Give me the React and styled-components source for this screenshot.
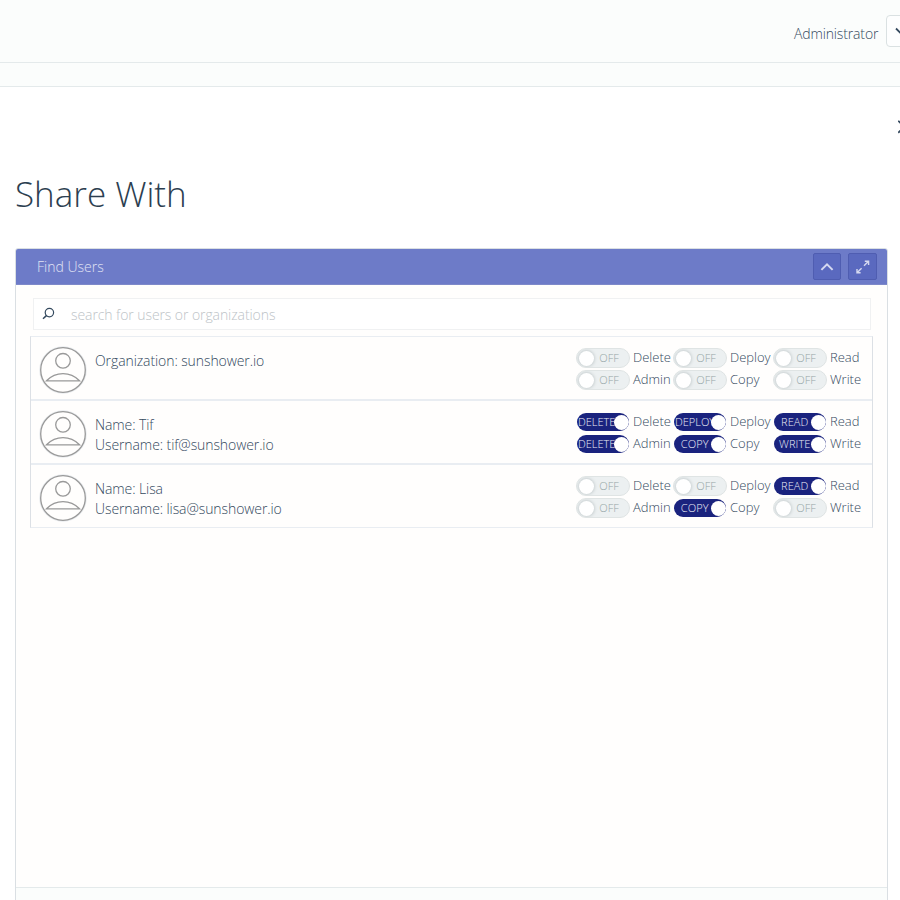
import React from "react";
import styled, { createGlobalStyle, css } from "styled-components";

const GlobalStyle = createGlobalStyle`
  * { box-sizing: border-box; }
  html, body { margin: 0; background: #fff; overflow: hidden; }
  body { font-family: "Open Sans", sans-serif; font-weight: 300; font-size: 14px; color: #34495e; }
`;

const Page = styled.div`
  width: 100%;
  height: 900px;
  overflow: hidden;
  display: flex;
  flex-direction: column;
`;

const TopBar = styled.header`
  flex: none;
  height: 63px;
  padding: 15px 0 0 794px;
  display: flex;
  align-items: flex-start;
  background: #fbfdfc;
  border-bottom: 1px solid #e4eaeb;
  overflow: hidden;
`;

const Account = styled.span`
  flex: none;
  width: 92px;
  line-height: 20px;
  margin-top: 9px;
  letter-spacing: -0.14px;
`;

const MenuButton = styled.button`
  flex: none;
  width: 32px;
  height: 32px;
  padding: 0 0 0 8px;
  border: 1px solid #dae1e2;
  border-radius: 4px;
  background: #fdfefe;
  color: #34495e;
  display: flex;
  align-items: center;
`;

const SubBar = styled.div`
  flex: none;
  height: 24px;
  background: #fbfdfc;
  border-bottom: 1px solid #e4eaeb;
`;

const CloseRow = styled.div`
  flex: none;
  height: 82px;
  padding: 33px 0 0 898px;
  overflow: hidden;
  svg { display: block; }
`;

const Title = styled.h1`
  flex: none;
  margin: 0 0 30px 15px;
  font-size: 35px;
  line-height: 49px;
  font-weight: 300;
  color: #2c3e50;
`;

const Panel = styled.section`
  flex: none;
  width: 873px;
  height: 680px;
  margin-left: 15px;
  border: 1px solid #dadfe3;
  border-radius: 3px 3px 0 0;
  background: #fbfdfc;
`;

const PanelHeader = styled.div`
  height: 36px;
  padding: 0 10px 0 21px;
  display: flex;
  align-items: center;
  gap: 7px;
  background: #6d7bc8;
  border-bottom: 1px solid #7e89c9;
  border-radius: 2px 2px 0 0;
  color: #e1e4f4;
`;

const PanelTitle = styled.span`
  flex: 1;
`;

const HeaderButton = styled.button`
  width: ${(p) => p.$width}px;
  height: 27px;
  padding: 0;
  display: flex;
  align-items: center;
  justify-content: center;
  border: 1px solid #4f5db1;
  border-radius: 2px;
  background: #5a69bf;
  color: #d5d9f0;
`;

const PanelBody = styled.div`
  height: 603px;
  padding: 13px 14px 0;
  background: #fffefd;
  border-bottom: 1px solid #e4eaeb;
`;

const Search = styled.label`
  height: 32px;
  margin: 0 2px 6px 3px;
  padding: 0 9px 0 8px;
  display: flex;
  align-items: center;
  gap: 16px;
  border: 1px solid #f0f1f2;
  background: #fff;
`;

const SearchInput = styled.input`
  flex: 1;
  border: 0;
  padding: 0;
  outline: 0;
  background: transparent;
  font: inherit;
  letter-spacing: -0.08px;
  &::placeholder { color: #bdc3c7; opacity: 1; }
`;

const List = styled.div`
  border: 1px solid #dce0e5;
  border-top-color: #e9edf2;
  border-bottom-color: #e9edf2;
`;

const UserRow = styled.div`
  height: ${(p) => (p.$last ? 62 : 64)}px;
  padding: 9px 8px 0;
  display: flex;
  border-bottom: ${(p) => (p.$last ? "0" : "2px solid #e9edf2")};
`;

const Details = styled.div`
  flex: 1;
  margin: 5px 0 0 8px;
  line-height: 20px;
  letter-spacing: -0.09px;
`;

const Permissions = styled.div`
  flex: none;
  height: 44px;
  margin-top: 1px;
  display: grid;
  grid-template-columns: 97px 100px 91px;
  grid-auto-rows: 22px;
`;

const Permission = styled.label`
  display: flex;
  align-items: center;
  gap: 3px;
  font-size: 13px;
  white-space: nowrap;
`;

const PermissionName = styled.span`
  line-height: 18px;
  padding-bottom: 2px;
`;

const Track = styled.span`
  flex: none;
  width: 54px;
  height: 20px;
  padding: 0 2px;
  display: flex;
  align-items: center;
  overflow: hidden;
  border: 1px solid #dfe4e4;
  border-radius: 10px;
  background: #ecf0f1;
  font-size: 11px;
  line-height: 18px;
  color: #95a5a6;
  ${(p) => p.$on && css`
    width: 52px;
    height: 18px;
    margin: 0 1px;
    padding: 0;
    border: 0;
    background: #1a237e;
    color: #eceef7;
  `}
`;

const Knob = styled.span`
  flex: none;
  width: 15px;
  height: 15px;
  border-radius: 50%;
  background: #fff;
  ${(p) => (p.$on
    ? css`margin-right: 0.5px;`
    : css`box-shadow: 0 0 3px 1px rgba(110, 125, 130, 0.28);`)}
`;

const State = styled.span`
  flex: 1;
  min-width: 0;
  display: flex;
  justify-content: ${(p) => (p.$fill ? "flex-start" : "center")};
  padding-left: ${(p) => (p.$fill ? 1 : p.$on ? 5 : 0)}px;
  padding-right: ${(p) => (p.$on ? 0 : 3)}px;
  letter-spacing: ${(p) => (p.$on && !p.$fill ? "0.1px" : "0")};
  white-space: nowrap;
`;

const Chevron = () => (
  <svg width="14" height="14" viewBox="0 0 14 14" fill="none" stroke="currentColor" strokeWidth="1.8">
    <path d="M1 4.5l5 5 5-5" />
  </svg>
);

const CloseIcon = () => (
  <svg width="14" height="14" viewBox="0 0 14 14" fill="none" stroke="#34495e" strokeWidth="1.8">
    <path d="M.2 .8l12 12M12.2 .8l-12 12" />
  </svg>
);

const CollapseIcon = () => (
  <svg width="14" height="14" viewBox="0 0 14 14" fill="none" stroke="currentColor" strokeWidth="2">
    <path d="M1.4 9.9L7 4.4l5.6 5.5" />
  </svg>
);

const ExpandIcon = () => (
  <svg width="14" height="14" viewBox="0 0 14 14" fill="none" stroke="currentColor" strokeWidth="1.4">
    <path d="M8.8 1.2h3.8v3.8M4.6 12.8H1V9M12.3 1.5L8 5.8M5.6 8.2L1.3 12.5" />
  </svg>
);

const SearchIcon = () => (
  <svg width="13" height="14" viewBox="0 0 13 14" fill="none" stroke="#34495e" strokeWidth="1.2">
    <circle cx="7.4" cy="5.6" r="4.2" />
    <path d="M4.4 8.6L1 11.8" strokeWidth="1.5" />
  </svg>
);

const AvatarIcon = () => (
  <svg width="48" height="48" viewBox="0 0 48 48" fill="none" stroke="#999" strokeWidth="1.3">
    <circle cx="24" cy="24" r="23" stroke="#e8ebee" strokeWidth="1.5" />
    <circle cx="24" cy="24" r="22.3" />
    <circle cx="24" cy="14.8" r="7.3" />
    <path d="M7.5 34.8Q14.5 27.7 24 27.7Q33.5 27.7 40.5 34.8Z" />
  </svg>
);

const permissions = [
  ["Delete", "DELETE"], ["Deploy", "DEPLOY"], ["Read", "READ"],
  ["Admin", "DELETE"], ["Copy", "COPY"], ["Write", "WRITE"],
];

const users = [
  { lines: ["Organization: sunshower.io"], granted: [] },
  { lines: ["Name: Tif", "Username: tif@sunshower.io"], granted: ["Delete", "Deploy", "Read", "Admin", "Copy", "Write"] },
  { lines: ["Name: Lisa", "Username: lisa@sunshower.io"], granted: ["Read", "Copy"] },
];

function Toggle({ on, text }) {
  return (
    <Track $on={on}>
      {!on && <Knob />}
      <State $on={on} $fill={on && text.length > 5}>{on ? text : "OFF"}</State>
      {on && <Knob $on />}
    </Track>
  );
}

export default function App() {
  return (
    <Page>
      <GlobalStyle />
      <TopBar>
        <Account>Administrator</Account>
        <MenuButton aria-label="Account menu"><Chevron /></MenuButton>
      </TopBar>
      <SubBar />
      <CloseRow><CloseIcon /></CloseRow>
      <Title>Share With</Title>
      <Panel>
        <PanelHeader>
          <PanelTitle>Find Users</PanelTitle>
          <HeaderButton $width={28} aria-label="Collapse"><CollapseIcon /></HeaderButton>
          <HeaderButton $width={29} aria-label="Expand"><ExpandIcon /></HeaderButton>
        </PanelHeader>
        <PanelBody>
          <Search>
            <SearchIcon />
            <SearchInput placeholder="search for users or organizations" />
          </Search>
          <List>
            {users.map((user, i) => (
              <UserRow key={user.lines[0]} $last={i === users.length - 1}>
                <AvatarIcon />
                <Details>
                  {user.lines.map((line) => <div key={line}>{line}</div>)}
                </Details>
                <Permissions>
                  {permissions.map(([label, text]) => (
                    <Permission key={label}>
                      <Toggle on={user.granted.includes(label)} text={text} />
                      <PermissionName>{label}</PermissionName>
                    </Permission>
                  ))}
                </Permissions>
              </UserRow>
            ))}
          </List>
        </PanelBody>
      </Panel>
    </Page>
  );
}
